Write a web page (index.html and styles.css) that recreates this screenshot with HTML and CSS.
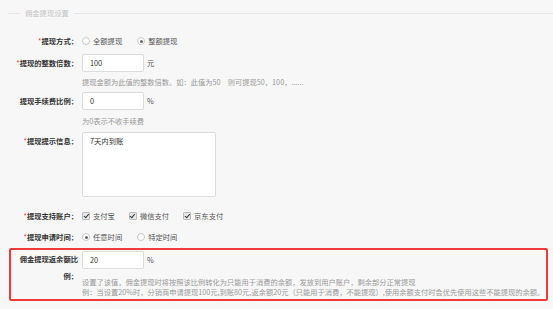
FILE: index.html
```html
<!DOCTYPE html>
<html lang="zh-CN">
<head>
  <meta charset="UTF-8" />
  <title>佣金提现设置</title>
  <link rel="stylesheet" href="styles.css">
</head>
<body>

  <div class="legend">
    <span class="legend-line short"></span>
    <span class="legend-text">佣金提现设置</span>
    <span class="legend-line"></span>
  </div>

  <div class="row row-a">
    <div class="label"><em>*</em>提现方式：</div>
    <div class="control">
      <span class="opt"><i class="radio"></i>全额提现</span>
      <span class="opt"><i class="radio on"></i>整额提现</span>
    </div>
  </div>

  <div class="row row-b">
    <div class="label"><em>*</em>提现的整数倍数：</div>
    <div class="control">
      <div class="field"><span class="input">100</span><span class="unit">元</span></div>
      <div class="help">提现金额为此值的整数倍数。如：此值为50　则可提现50，100，......</div>
    </div>
  </div>

  <div class="row row-c">
    <div class="label">提现手续费比例：</div>
    <div class="control">
      <div class="field"><span class="input">0</span><span class="unit">%</span></div>
      <div class="help">为0表示不收手续费</div>
    </div>
  </div>

  <div class="row row-d">
    <div class="label"><em>*</em>提现提示信息：</div>
    <div class="control">
      <div class="textarea">7天内到账</div>
    </div>
  </div>

  <div class="row row-e">
    <div class="label"><em>*</em>提现支持账户：</div>
    <div class="control">
      <span class="opt"><i class="check"></i>支付宝</span>
      <span class="opt"><i class="check"></i>微信支付</span>
      <span class="opt"><i class="check"></i>京东支付</span>
    </div>
  </div>

  <div class="row row-f">
    <div class="label"><em>*</em>提现申请时间：</div>
    <div class="control">
      <span class="opt"><i class="radio on"></i>任意时间</span>
      <span class="opt"><i class="radio"></i>特定时间</span>
    </div>
  </div>

  <!-- 高亮区域 -->
  <div class="row row-g highlight">
    <div class="label">佣金提现返余额比例：</div>
    <div class="control">
      <div class="field"><span class="input">20</span><span class="unit">%</span></div>
      <div class="help">
        设置了该值，佣金提现时将按照该比例转化为只能用于消费的余额，发放到用户账户，剩余部分正常提现<br>
        例：当设置20%时，分销商申请提现100元,到账80元,返余额20元（只能用于消费，不能提现）,使用余额支付时会优先使用这些不能提现的余额。
      </div>
    </div>
  </div>

</body>
</html>
```

FILE: styles.css
```css
body {
  margin: 0;
  background: #f7f7f7;
  font-family: "Noto Sans CJK SC", "Liberation Sans", sans-serif;
  font-size: 7.3px;
  color: #555;
}

.legend {
  display: flex;
  align-items: center;
  height: 10px;
  margin-top: 8px;
  padding-left: 8px;
}

.legend-line {
  flex: 1;
  height: 1px;
  background: #e6e6e6;
}

.legend-line.short {
  flex: none;
  width: 12px;
}

.legend-text {
  margin: 0 5px;
  color: #c4c4c4;
  line-height: 10px;
}

.row {
  display: flex;
  padding-left: 14px;
}

.label {
  width: 64px;
  flex: none;
  text-align: right;
  font-weight: 700;
  color: #333;
  line-height: 18px;
}

.label em {
  font-style: normal;
  font-weight: 400;
  color: #e83333;
}

.control {
  margin-left: 4px;
}

.row-a { margin-top: 14px; }
.row-b { margin-top: 4px; }
.row-c { margin-top: 5px; }
.row-d { margin-top: 6px; }
.row-e { margin-top: 10px; }
.row-f { margin-top: 3px; }

.row-a .control,
.row-e .control,
.row-f .control {
  display: flex;
  align-items: center;
  height: 18px;
}

.opt {
  display: flex;
  align-items: center;
  margin-right: 15px;
  color: #555;
}

.row-e .opt { margin-right: 14px; }

.radio {
  width: 6px;
  height: 6px;
  border: 1px solid #c8c8c8;
  border-radius: 50%;
  background: #fff;
  margin-right: 3px;
  position: relative;
}

.radio.on::after {
  content: "";
  position: absolute;
  left: 1.5px;
  top: 1.5px;
  width: 3px;
  height: 3px;
  border-radius: 50%;
  background: #666;
}

.check {
  width: 6px;
  height: 6px;
  border: 1px solid #bbb;
  border-radius: 1px;
  background: #e8e8e8;
  margin-right: 3px;
  position: relative;
}

.check::after {
  content: "";
  position: absolute;
  left: 1.5px;
  top: 0;
  width: 2px;
  height: 3.5px;
  border: solid #333;
  border-width: 0 1.2px 1.2px 0;
  transform: rotate(40deg);
}

.field {
  display: flex;
  align-items: center;
}

.input {
  display: block;
  box-sizing: border-box;
  width: 62px;
  height: 18px;
  line-height: 16px;
  padding: 0 7px;
  background: #fff;
  border: 1px solid #dcdcdc;
  border-radius: 2px;
  color: #333;
}

.unit {
  margin-left: 3px;
  color: #555;
}

.help {
  margin-top: 5px;
  font-size: 7.25px;
  line-height: 10px;
  color: #999;
  white-space: nowrap;
}

.row-c .help { margin-top: 6px; }

.textarea {
  box-sizing: border-box;
  width: 134px;
  height: 65px;
  padding: 3px 7px;
  line-height: 10px;
  background: #fff;
  border: 1px solid #dcdcdc;
  border-radius: 2px;
  color: #333;
}

.highlight {
  margin-top: 2px;
  margin-left: 9px;
  width: 539px;
  box-sizing: border-box;
  padding: 1px 0 2px 3px;
  border: 2px solid #f03a3a;
  border-radius: 2px;
}

.highlight .label {
  line-height: 17px;
}

.highlight .help {
  margin-top: 8px;
}
```
